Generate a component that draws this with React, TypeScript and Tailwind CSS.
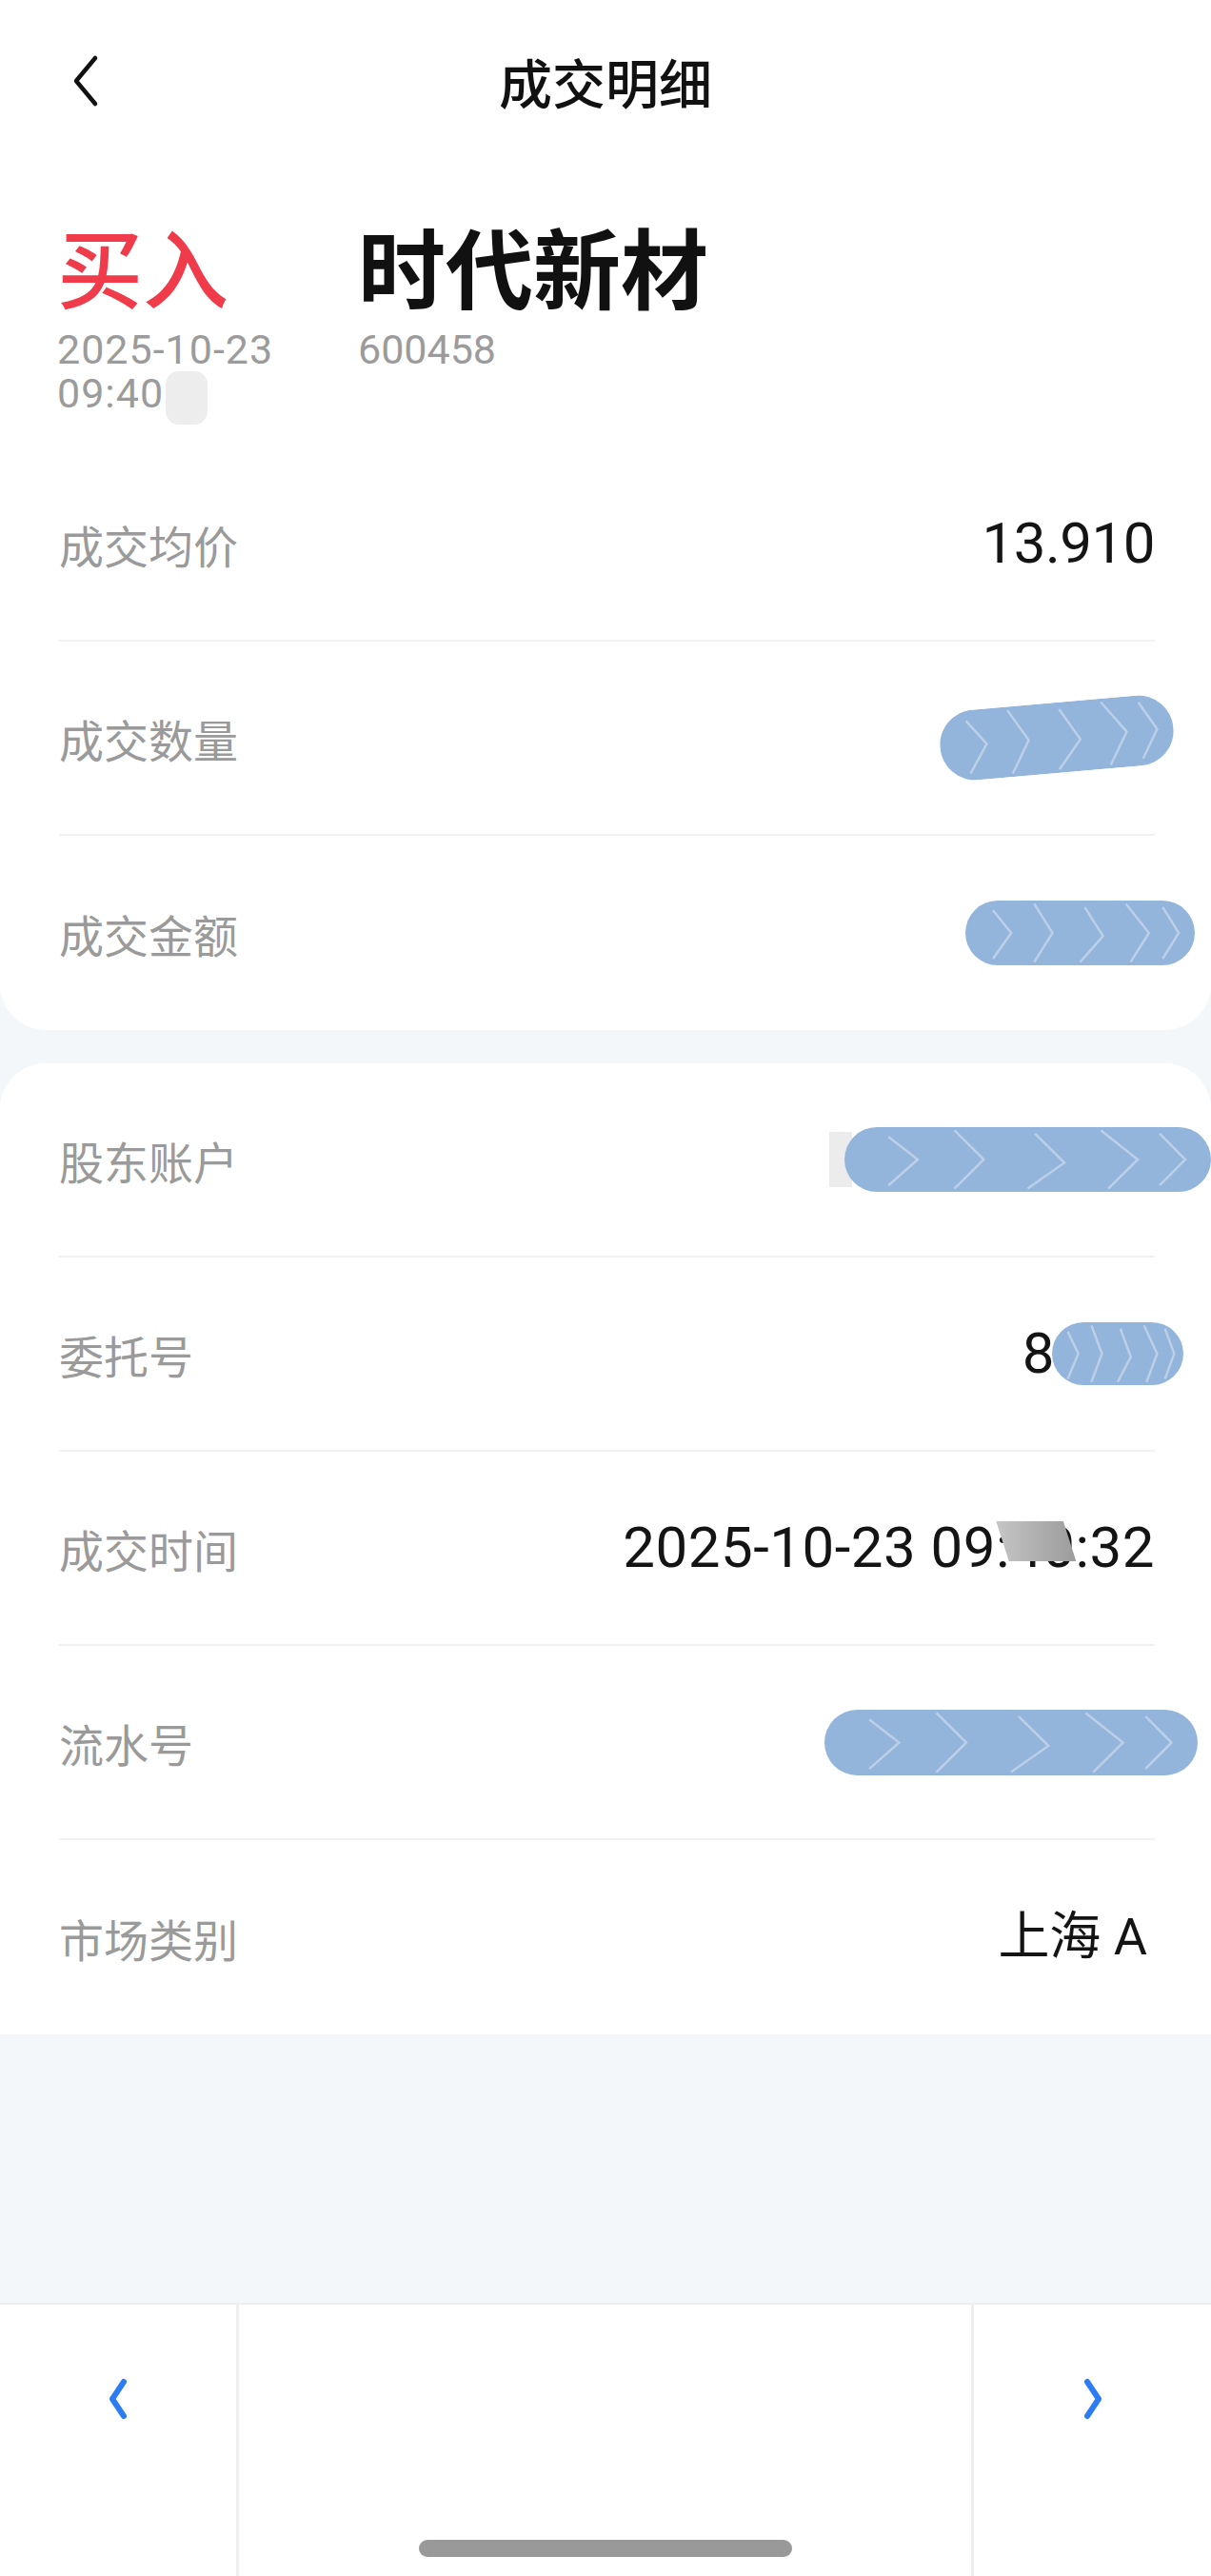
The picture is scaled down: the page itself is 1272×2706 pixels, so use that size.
import type { ReactNode } from 'react';

// redaction smudge drawn over hidden values
function Smudge({ w, h, tilt = 0 }: { w: number; h: number; tilt?: number }) {
  const r = h / 2;
  return (
    <svg
      width={w}
      height={h}
      viewBox={`0 0 ${w} ${h}`}
      className="block shrink-0"
      style={{ transform: `rotate(${tilt}deg)` }}
    >
      <rect x="0" y="0" width={w} height={h} rx={r} fill="#93b5dc" />
      <g fill="none" stroke="#dfe3f0" strokeOpacity="0.55" strokeWidth="2.5">
        <polyline points={`${w * 0.12},${h * 0.15} ${w * 0.2},${h * 0.5} ${w * 0.12},${h * 0.9}`} />
        <polyline points={`${w * 0.3},${h * 0.05} ${w * 0.38},${h * 0.5} ${w * 0.3},${h * 0.95}`} />
        <polyline points={`${w * 0.52},${h * 0.1} ${w * 0.6},${h * 0.55} ${w * 0.5},${h * 0.95}`} />
        <polyline points={`${w * 0.7},${h * 0.05} ${w * 0.8},${h * 0.5} ${w * 0.72},${h * 0.95}`} />
        <polyline points={`${w * 0.86},${h * 0.1} ${w * 0.93},${h * 0.5} ${w * 0.86},${h * 0.9}`} />
      </g>
    </svg>
  );
}

function Row({ label, children, last = false }: { label: string; children: ReactNode; last?: boolean }) {
  return (
    <div
      className={`ml-[62px] mr-[59px] h-[204px] flex items-center justify-between ${
        last ? '' : 'border-b-2 border-[#f1f1f1]'
      }`}
    >
      <span className="text-[47px] leading-none text-[#9a9a9a] font-['Noto_Sans_CJK_SC',sans-serif]">
        {label}
      </span>
      <div className="flex items-center text-[60px] leading-none tracking-[-0.5px] text-[#141414]">
        {children}
      </div>
    </div>
  );
}

function Chevron({ dir, className }: { dir: 'left' | 'right'; className: string }) {
  return (
    <svg width="22" height="44" viewBox="0 0 22 44" className={className}>
      <polyline
        points={dir === 'left' ? '17,4 5,22 17,40' : '5,4 17,22 5,40'}
        fill="none"
        stroke="currentColor"
        strokeWidth="6"
        strokeLinecap="round"
        strokeLinejoin="round"
      />
    </svg>
  );
}

export default function App() {
  return (
    <div className="w-[1272px] min-h-[2706px] bg-[#f4f7fa] flex flex-col font-['Roboto','Noto_Sans_CJK_SC',sans-serif]">
      {/* Top card: header, stock, trade numbers */}
      <div className="bg-white rounded-b-[48px]">
        <header className="h-[170px] flex items-center">
          <div className="w-[220px] pl-[74px] flex items-center">
            <svg width="30" height="56" viewBox="0 0 30 56" className="text-[#111]">
              <polyline
                points="26,4 6,28 26,52"
                fill="none"
                stroke="currentColor"
                strokeWidth="4.5"
                strokeLinecap="round"
                strokeLinejoin="round"
              />
            </svg>
          </div>
          <h1 className="flex-1 text-center text-[56px] leading-none font-medium text-[#111] font-['Noto_Sans_CJK_SC',sans-serif]">
            成交明细
          </h1>
          <div className="w-[220px]" />
        </header>

        <section className="pt-[58px] pb-[34px] pl-[60px] flex">
          <div className="w-[316px]">
            <div className="h-[100px] flex items-center text-[90px] leading-none font-medium text-[#f03b4b] font-['Noto_Sans_CJK_SC',sans-serif]">
              买入
            </div>
            <div className="mt-[16px] text-[43px] leading-[46px] tracking-[1px] text-[#9b9b9b]">
              <div>2025-10-23</div>
              <div className="flex items-start h-[46px]">
                <span>09:40</span>
                <span className="ml-[2px] w-[44px] h-[56px] rounded-[14px] bg-[#ededed]" />
              </div>
            </div>
          </div>
          <div>
            <div className="h-[100px] flex items-center text-[92px] leading-none font-bold text-[#111] font-['Noto_Sans_CJK_SC',sans-serif]">
              时代新材
            </div>
            <div className="mt-[16px] text-[43px] leading-[46px] text-[#9b9b9b]">600458</div>
          </div>
        </section>

        <Row label="成交均价">13.910</Row>
        <Row label="成交数量">
          <span className="-mr-[20px]">
            <Smudge w={246} h={74} tilt={-5} />
          </span>
        </Row>
        <Row label="成交金额" last>
          <span className="-mr-[42px]">
            <Smudge w={241} h={68} />
          </span>
        </Row>
      </div>

      {/* Second card: account info */}
      <div className="mt-[35px] bg-white rounded-t-[48px]">
        <Row label="股东账户">
          <span className="w-[24px] h-[58px] bg-[#ececec] -mr-[8px]" />
          <span className="-mr-[59px]">
            <Smudge w={385} h={68} />
          </span>
        </Row>
        <Row label="委托号">
          <span>8</span>
          <span className="-ml-[2px] -mr-[30px]">
            <Smudge w={138} h={66} />
          </span>
        </Row>
        <Row label="成交时间">
          <span className="relative tracking-[0.5px]">
            2025-10-23 09:40:32
            <span className="absolute left-[392px] top-[2px] w-[84px] h-[42px] bg-gradient-to-r from-[#c6c6c6] via-[#b0b0b0] to-[#9c9c9c] [clip-path:polygon(0_0,84%_0,100%_100%,16%_100%)]" />
          </span>
        </Row>
        <Row label="流水号">
          <span className="-mr-[45px]">
            <Smudge w={392} h={69} />
          </span>
        </Row>
        <Row label="市场类别" last>
          <span className="text-[54px] tracking-normal mr-[8px]">上海 A</span>
        </Row>
      </div>

      <div className="flex-1" />

      {/* Bottom pager bar */}
      <footer className="h-[287px] bg-white border-t-2 border-[#eeeeee] flex">
        <div className="w-[251px] border-r-[3px] border-[#efefef] flex flex-col items-center">
          <div className="h-[198px] flex items-center justify-center">
            <Chevron dir="left" className="text-[#2c7cf3]" />
          </div>
        </div>
        <div className="flex-1 flex flex-col items-center justify-end pb-[20px]">
          <div className="w-[392px] h-[18px] rounded-full bg-[#999999]" />
        </div>
        <div className="w-[252px] border-l-[3px] border-[#efefef] flex flex-col items-center">
          <div className="h-[198px] flex items-center justify-center">
            <Chevron dir="right" className="text-[#2c7cf3]" />
          </div>
        </div>
      </footer>
    </div>
  );
}
